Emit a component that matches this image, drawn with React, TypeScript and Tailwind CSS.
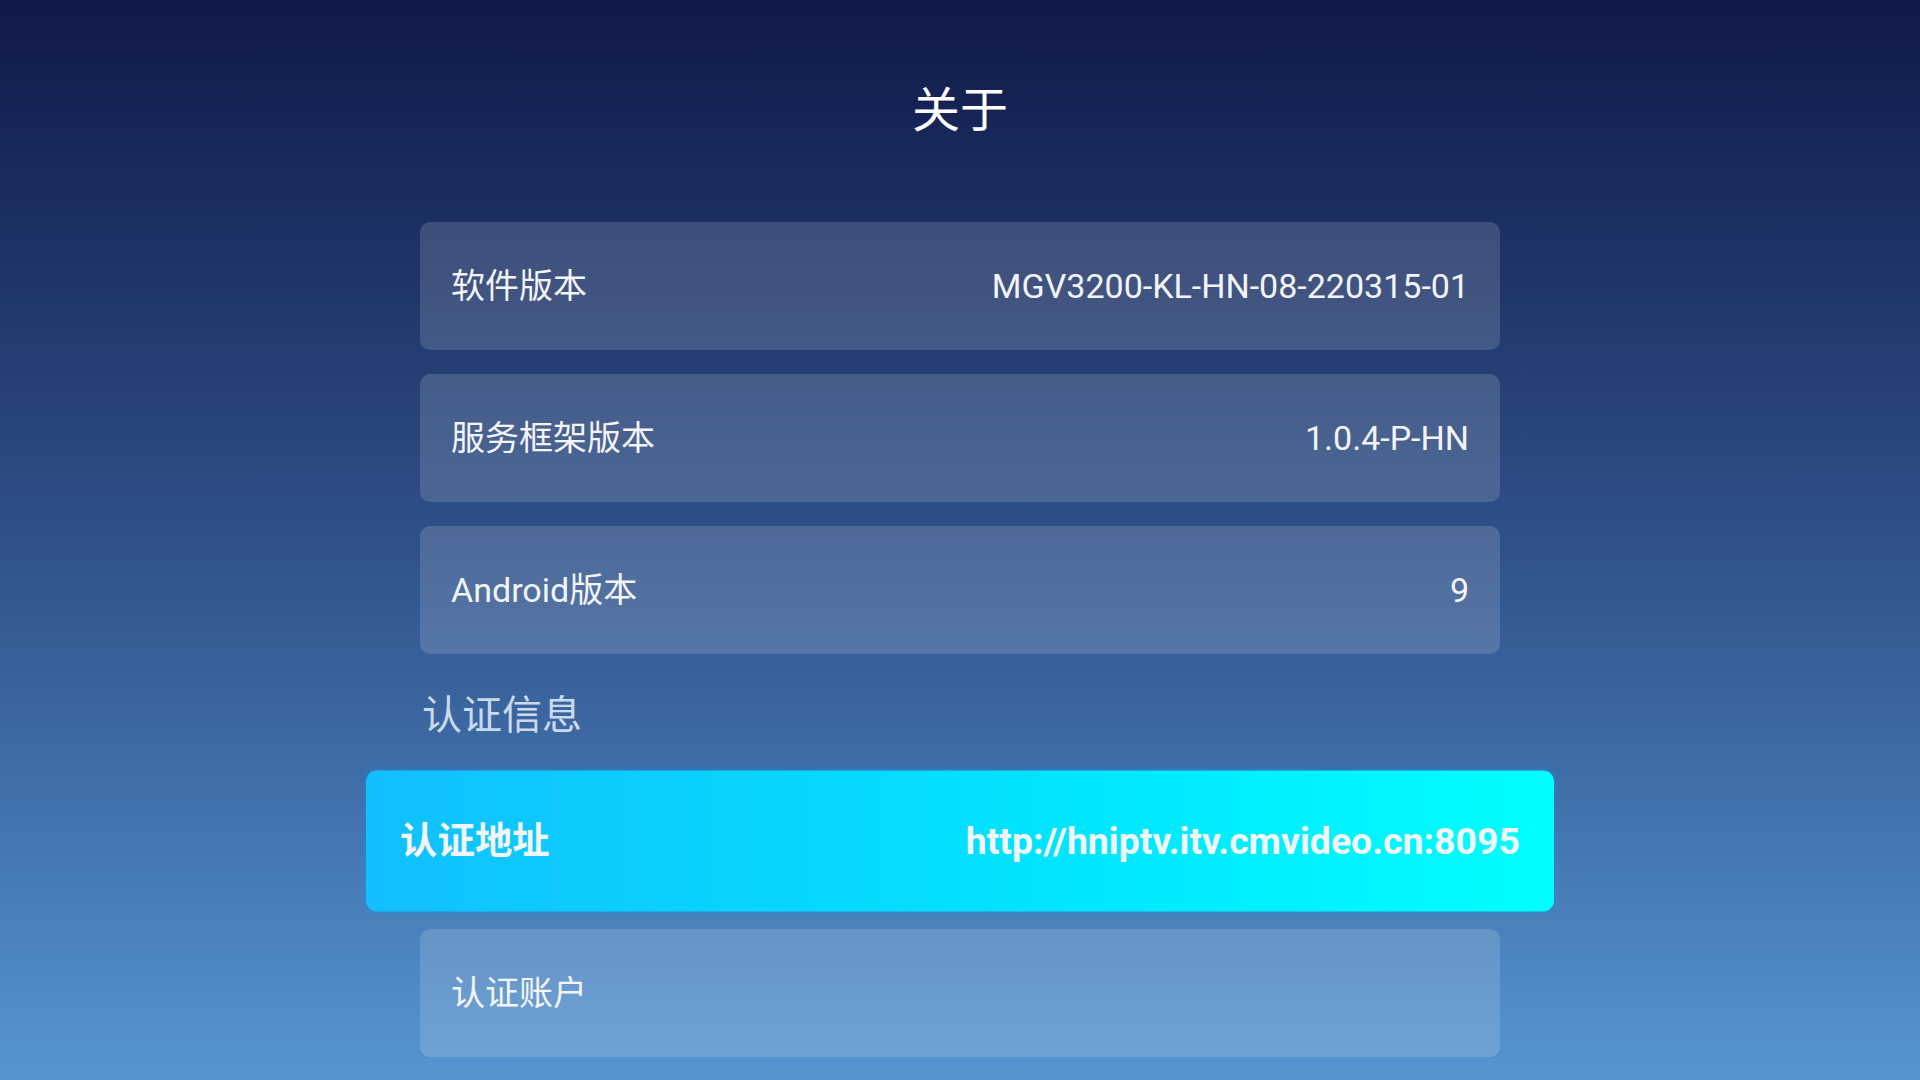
const font = "font-['Roboto','Noto_Sans_CJK_SC',sans-serif]";

interface InfoRowProps {
	label: string;
	value?: string;
}

function InfoRow({ label, value }: InfoRowProps) {
	return (
		<div className="flex h-[128px] w-[1080px] items-center justify-between rounded-[10px] bg-white/15 px-[31px] text-[34px] text-[#f2f4f8]">
			<span>{label}</span>
			{value && <span>{value}</span>}
		</div>
	);
}

export default function App() {
	return (
		<div
			className={`flex h-[1080px] w-full flex-col items-center overflow-hidden bg-linear-to-b from-[#101948] via-[#2f5189] to-[#5695d2] ${font}`}
		>
			{/* Title */}
			<div className="flex h-[222px] items-center text-[48px] text-white">关于</div>

			<div className="flex flex-col items-center gap-6">
				<InfoRow label="软件版本" value="MGV3200-KL-HN-08-220315-01" />
				<InfoRow label="服务框架版本" value="1.0.4-P-HN" />
				<InfoRow label="Android版本" value="9" />

				{/* Section header */}
				<div className="flex h-[75px] w-[1080px] items-center pl-[2px] text-[40px] text-[#c9d9ee]">认证信息</div>

				{/* Focused row */}
				<div className="flex h-[128px] w-[1080px] scale-[1.1] items-center justify-between rounded-[10px] bg-linear-to-r from-[#12bfff] to-[#00fffd] px-[31px] text-[34px] font-bold text-[#f3f6f8] shadow-[0_0_6px_rgba(0,160,255,0.4)]">
					<span>认证地址</span>
					<span>http://hniptv.itv.cmvideo.cn:8095</span>
				</div>

				<InfoRow label="认证账户" />
			</div>
		</div>
	);
}
